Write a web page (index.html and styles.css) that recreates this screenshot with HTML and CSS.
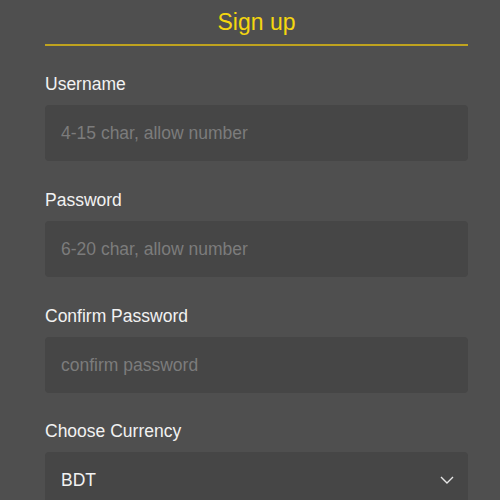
FILE: index.html
```html
<!DOCTYPE html>
<html>
<head>
<meta charset="utf-8">
<link rel="stylesheet" href="styles.css">
</head>
<body>
<div class="form">
  <div class="header"><h1 class="title">Sign up</h1></div>
  <div class="field">
    <label class="label">Username</label>
    <div class="input"><span class="ph">4-15 char, allow number</span></div>
  </div>
  <div class="field">
    <label class="label">Password</label>
    <div class="input"><span class="ph">6-20 char, allow number</span></div>
  </div>
  <div class="field">
    <label class="label">Confirm Password</label>
    <div class="input"><span class="ph">confirm password</span></div>
  </div>
  <div class="field last">
    <label class="label">Choose Currency</label>
    <div class="input select"><span class="val">BDT</span>
      <svg class="chev" width="14" height="8" viewBox="0 0 14 8"><path d="M1 1 L7 7 L13 1" fill="none" stroke="#e6e6e6" stroke-width="1.4"/></svg>
    </div>
  </div>
</div>
</body>
</html>
```
FILE: styles.css
```css
html, body {
  margin: 0;
  padding: 0;
  background: #4f4f4f;
  font-family: "Liberation Sans", Arial, sans-serif;
}
.form {
  margin-left: 45px;
  width: 423px;
}
.header {
  height: 44px;
  border-bottom: 2px solid #bfa31f;
  display: flex;
  align-items: center;
  justify-content: center;
}
.title {
  margin: 0;
  font-size: 23px;
  font-weight: normal;
  color: #f5d60f;
}
.field {
  margin-top: 28px;
  display: flex;
  flex-direction: column;
}
.field + .field {
  margin-top: 29px;
}
.field.last {
  margin-top: 28px;
}
.label {
  font-size: 17.5px;
  line-height: 20px;
  color: #f2f2f2;
  margin-bottom: 11px;
}
.input {
  height: 56px;
  border-radius: 4px;
  background: #464646;
  display: flex;
  align-items: center;
  padding: 0 14px 0 16px;
  box-sizing: border-box;
}
.ph {
  font-size: 17.5px;
  color: #7c7c7c;
}
.select {
  justify-content: space-between;
}
.val {
  font-size: 17.5px;
  color: #f2f2f2;
}
```
